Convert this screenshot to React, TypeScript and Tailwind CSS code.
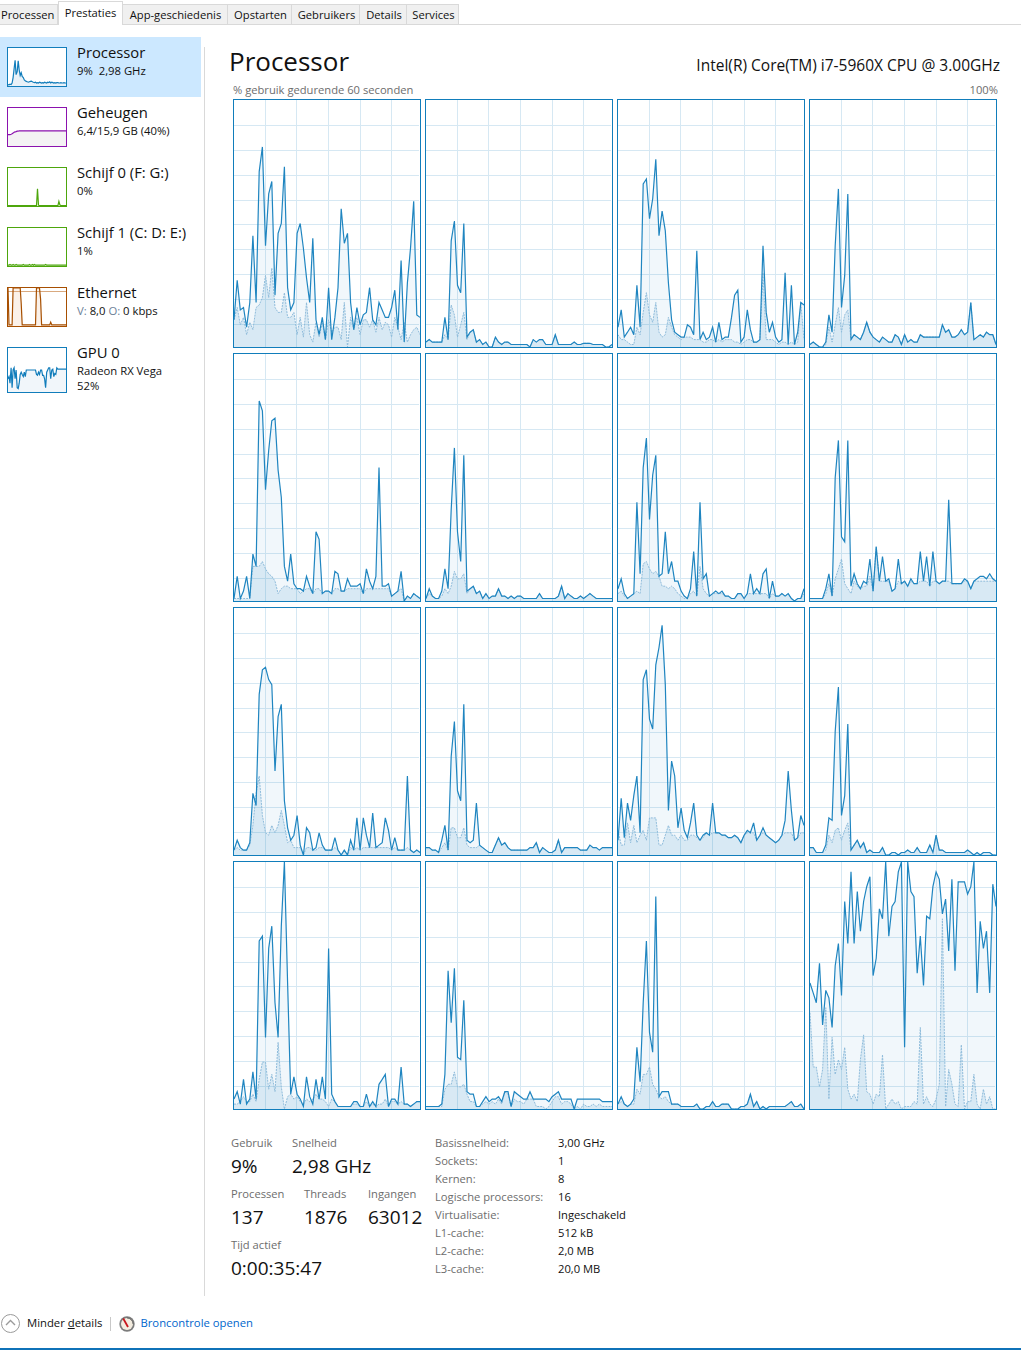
const font = { fontFamily: '"Open Sans", "Noto Sans", sans-serif' };

type CoreData = { u: number[]; k: number[]; cap: number };

const cores: CoreData[] = [
  {
    u: [11,27,15,16,8,18,45,18,71,81,41,62,67,21,46,50,73,24,15,18,46,50,40,28,18,44,11,5,12,3,24,3,12,24,56,42,46,18,7,16,9,13,14,24,11,9,18,15,12,12,16,23,7,35,2,26,40,59,13,12],
    k: [11,16,9,12,5,10,7,16,17,20,29,20,32,16,14,14,22,12,12,14,5,12,4,18,5,2,10,4,10,3,11,6,8,8,3,18,0,12,7,12,5,11,11,8,11,6,12,7,10,9,4,12,8,3,10,2,5,7,8,5],
    cap: 100,
  },
  {
    u: [2,3,2,2,2,2,12,3,43,51,25,22,50,4,6,7,2,3,1,2,0,0,4,2,1,2,2,1,1,1,1,1,1,0,3,2,3,3,1,1,1,5,1,1,1,1,1,2,1,1,1.5,1.5,1.5,1,1,1,1,0,0,1],
    k: [2,3,2,2,2,2,5,3,17,13,4,9,14,3],
    cap: 100,
  },
  {
    u: [8,15,4,6,8,5,25,8,66,68,52,60,76,45,55,47,26,11,6,5,4,4,9,8,5,39,3,6,3,4,8,2,10,3,4,4,12,21,23,2,4,15,7,2,2,3,41,14,6,10,4,2,3,30,1,25,1,6,18,17],
    k: [5,3,3,2,1,1,8,5,14,22,13,10,18,6,4,5,12,8,5,4,3,4,4,4,3,3,3,2,2,3,3,2,3,2,3,3,3,2,2,1,2,3,3,2,2,3,30,3,3,3,2,1,2,2,1,2,1,2,18,3],
    cap: 100,
  },
  {
    u: [1,2,1,0,0,2,13,6,41,64,16,29,62,3,5,4,3,6,10,6,4,3,2,4,3,2,2,5,4,1,5,2,3,2,2,5,4,4,4,4,4,4,9,6,7,4,4,5,7,5,6,18,3,4,5,4,6,5,5,1],
    k: [1,2,1,0,0,1,8,2,9,16,6,13,15,3],
    cap: 100,
  },
  {
    u: [1,10,1,4,10,1,19,14,81,77,45,61,73,74,53,42,14,8,19,7,5,5,4,10,6,3,28,25,3,4,4,3,12,11,4,4,9,6,6,6,7,3,13,8,5,10,54,6,6,7,2,3,4,12,0,2,1,3,2,1],
    k: [1,1,1,1,1,1,14,14,14,16,13,11,10,8,3,5,6,6,5,5,5,3],
    cap: 5,
  },
  {
    u: [1,5,2,1,1,4,13,5,37,62,28,16,59,4,5,6,3,4,1,3,1,2,2,5,2,2,1,2,1,2,2,1,1,1,1,1,3,1,1,1,1,1,2,6,1,3,2,1,1,2,1,2,3,2,1,1,1,1,1,1],
    k: [1,3,2,1,1,2,5,3,6,12,9,9,11,3],
    cap: 100,
  },
  {
    u: [5,9,3,1,2,3,40,11,54,66,33,51,59,10,11,28,11,16,8,8,4,2,1,5,20,2,40,9,11,2,3,4,3,4,2,2,1,1,3,3,1,3,11,3,5,3,11,13,1,8,2,2,3,2,3,1,0,1,1,5],
    k: [3,4,2,1,2,3,4,3,15,16,13,11,12,10,6,6,5,6,5,3,2,1,1,3,4,2,14,5],
    cap: 3,
  },
  {
    u: [1,1,1,1,1,5,11,2,50,65,26,24,65,6,11,7,5,8,7,17,4,22,8,18,8,9,4,5,17,7,8,6,9,7,7,20,8,18,6,20,8,7,8,8,41,7,7,7,7,9,8,5,8,9,10,10,9,11,9,8],
    k: [1,1,1,1,1,3,7,2,9,13,17,7,5,3,8,6,5,6,6,10,4,22],
    cap: 8,
  },
  {
    u: [2,6,3,2,2,5,25,20,65,75,76,71,69,34,56,61,22,11,6,8,16,4,0,11,9,2,3,9,4,2,2,2,7,2,0,2,0,6,2,15,2,15,8,3,17,3,4,5,15,10,2,7,2,2,2,32,2,1,2,1],
    k: [2,3,2,2,2,4,12,25,32,16,9,8,12,9,12,18,12,5,6,3,3,3,0,3,3,2,2,3,3,2],
    cap: 3,
  },
  {
    u: [3,3,2,2,1,6,12,2,40,54,26,22,61,6,5,6,21,4,3,2,1,1,4,7,4,5,3,2,2,2,2,2,2,3,3,5,1,3,2,1,1,2,6,1,3,3,3,3,3,2,2,2,4,3,3,2,3,3,3,3],
    k: [3,3,2,2,1,3,5,2,11,11,7,7,11,4,3,3,3],
    cap: 100,
  },
  {
    u: [6,23,7,21,14,24,32,9,71,75,55,51,77,84,93,69,18,38,32,11,19,10,7,13,21,8,6,8,9,8,21,9,9,8,8,7,7,8,7,5,8,10,9,13,6,8,11,8,7,6,5,6,8,14,34,18,6,7,16,12],
    k: [10,4,4,13,5,12,5,8,10,6,15,15,15,4,4,8,12,8,8,6,8,6,6,8,8,7,6,7],
    cap: 9,
  },
  {
    u: [3,3,1,1,1,4,15,14,50,68,16,24,53,2,4,6,3,5,1,2,1,1,1,3,0,0,1,1,0,1,1,2,1,1,3,1,1,1,4,1,8,2,2,1,1,1,1,1,1,1,2,1,0,1,0,1,1,1,0,0],
    k: [3,3,1,1,1,2,8,5,10,11,6,10,13,2],
    cap: 100,
  },
  {
    u: [4,7,2,12,2,4,15,4,68,70,29,65,74,43,29,74,100,51,6,13,6,4,1,13,5,2,12,4,13,4,65,6,3,1,1,1,1,1,3,3,1,1,6,1,3,1,10,12,14,1,4,4,2,17,2,2,1,2,3,3],
    k: [2,2,3,5,3,3,6,3,12,19,19,8,14,7,27,9,0,5,6,4,5,3,2,4,3,4,6,4,4,3,1,4,3,1,1,1,1,1,2,2,1,1,3,1,2,1,2,2,4],
    cap: 3,
  },
  {
    u: [1,1,1,1,1,2,14,56,35,57,21,20,44,7,6,6,1,1,3,5,3,4,4,5,3,7,7,1,7,6,5,4,4,7,4,4,4,4,4,3,5,6,7,4,4,4,4,0,4,4,4,4,4,4,4,4,3,3,3,3],
    k: [1,1,1,1,1,1,8,10,10,15,9,9,10,6,3,3,1,1,2,3,2,3,2,4,2,7,6,1,4,3,3,2,4,4,4,1,1,1,0,1,3,5,5,2,3,3,2,0,1,0,2,1,1,2,1,2,1,1,1,1],
    cap: 100,
  },
  {
    u: [2,5,2,1,2,4,25,11,43,68,31,23,86,5,7,7,7,2,2,2,1,1,1,1,1,2,0,0,1,1,3,1,1,2,2,2,0,0,0,1,1,2,6,1,3,0,1,0,1,1,1,1,1,1,2,3,1,1,2,0],
    k: [2,3,2,1,2,2,8,6,14,14,17,10,8,5,4,5,3],
    cap: 100,
  },
  {
    u: [51,47,43,59,34,48,45,33,58,67,46,84,67,96,67,88,72,84,90,94,54,61,81,77,100,70,82,84,96,100,25,100,88,86,55,70,50,78,77,90,96,93,79,85,64,93,56,92,92,92,87,90,100,47,76,65,72,47,91,82],
    k: [39,17,17,9,16,41,4,29,14,20,16,25,8,4,6,3,20,30,7,6,2,6,5,22,0,2,4,2,3,0,1,1,1,3,2,33,2,5,2,1,4,10,77,1,16,10,2,1,26,0,3,3,14,2,0,8,2,5,0,0],
    cap: 100,
  },
];

const tabs = [
  { label: "Processen", w: "w-[58px] justify-start pl-px" },
  { label: "Prestaties", w: "w-[65px]", active: true },
  { label: "App-geschiedenis", w: "w-[105px] pl-px" },
  { label: "Opstarten", w: "w-[64px] pl-[2px]" },
  { label: "Gebruikers", w: "w-[68px] pl-[2px]" },
  { label: "Details", w: "w-[47px] pl-[2px]" },
  { label: "Services", w: "w-[52px] pl-[2px]" },
];

const specs = [
  ["Basissnelheid:", "3,00 GHz"],
  ["Sockets:", "1"],
  ["Kernen:", "8"],
  ["Logische processors:", "16"],
  ["Virtualisatie:", "Ingeschakeld"],
  ["L1-cache:", "512 kB"],
  ["L2-cache:", "2,0 MB"],
  ["L3-cache:", "20,0 MB"],
];

function points(values: number[], w: number, h: number) {
  const step = w / (values.length - 1);
  return values.map((v, i) => `${(i * step).toFixed(1)},${(h - (v / 100) * h).toFixed(1)}`).join(" ");
}

function area(values: number[], w: number, h: number) {
  return `0,${h} ${points(values, w, h)} ${w},${h}`;
}

function CoreGraph({ data }: { data: CoreData }) {
  const w = 186;
  const h = 247;
  const kernel = data.u.map((v, i) => (i < data.k.length ? data.k[i] : Math.min(v, data.cap)));
  const rows = [25, 50, 75, 100, 124, 149, 174, 199, 224];
  const cols = [31, 62, 94, 126, 157];

  return (
    <div className="w-[188px] h-[249px] border border-[#117dbb] bg-white">
      <svg width={w} height={h} className="block">
        {rows.map((y) => (
          <line key={y} x1={0} x2={w - 1} y1={y + 0.5} y2={y + 0.5} stroke="#d6e8f3" />
        ))}
        {cols.map((x) => (
          <line key={x} x1={x + 0.5} x2={x + 0.5} y1={0} y2={h} stroke="#d6e8f3" />
        ))}
        <polygon points={area(data.u, w, h)} fill="#117dbb" fillOpacity={0.06} />
        <polygon points={area(kernel, w, h)} fill="#117dbb" fillOpacity={0.11} />
        <polyline points={points(kernel, w, h)} fill="none" stroke="#8fbcdb" strokeDasharray="2 1" />
        <polyline points={points(data.u, w, h)} fill="none" stroke="#1f85c0" strokeWidth={1.2} />
      </svg>
    </div>
  );
}

function MiniGraph({
  values,
  border,
  fill,
  height = "h-[40px]",
  h = 38,
  children,
}: {
  values: number[];
  border: string;
  fill: string;
  height?: string;
  h?: number;
  children?: React.ReactNode;
}) {
  return (
    <div className={`w-[60px] ${height} border bg-white shrink-0`} style={{ borderColor: border }}>
      <svg width={58} height={h} className="block">
        <polygon points={area(values, 58, h)} fill={fill} />
        {children}
        <polyline points={points(values, 58, h)} fill="none" stroke={border} strokeWidth={1.2} />
      </svg>
    </div>
  );
}

const cpuMini = [4,3,5,4,8,22,45,68,30,38,66,42,28,35,25,22,16,14,12,11,10,11,12,13,11,10,9,10,8,9,8,10,9,8,9,8,10,9,8,10,9,11,8,10,9,8,9,8,9,9,8,8,9,8,8,9,8,8];
const memMini = [30,30,30,31,32,34,36,37,38,39,39,40,40,40,40,40,40,40,40,40,40,40,40,40,40,40,40,40,40,40,40,40,40,40,40,40,40,40,40,40,40,40,40,40,40,40,40,40,40,40,40,40,40,40,40,40,40,40];
const disk0Mini = [1,1,1,1,1,1,1,1,1,1,1,1,1,1,1,1,1,1,1,1,1,1,1,1,1,1,1,1,1,45,2,1,1,1,1,1,1,1,1,1,1,1,1,1,1,1,1,1,1,1,12,3,1,1,1,1,1,1];
const disk1Mini = [2,2,4,2,2,4,2,2,4,2,2,2,2,2,2,4,2,2,2,2,2,4,2,2,4,2,4,2,2,2,2,2,2,2,2,2,2,4,2,2,2,2,2,2,2,2,2,2,2,2,2,2,2,2,2,2,2,2];
const netMini = [100,3,3,3,3,100,100,100,100,100,100,100,100,60,3,3,3,3,3,3,3,3,3,3,3,3,3,3,100,100,100,100,70,3,3,3,3,3,3,3,3,3,10,3,3,3,3,3,3,3,3,3,3,3,3,3,3,3];
const gpuMini = [30,35,20,55,10,50,55,30,50,10,8,20,40,45,40,35,45,35,50,50,50,50,50,50,50,50,50,50,40,38,45,40,50,50,38,38,30,10,45,50,55,55,30,50,52,35,42,40,55,52,52,52,52,52,52,52,52,52];

function SideItem({ title, children, graph, active }: { title: string; children: React.ReactNode; graph: React.ReactNode; active?: boolean }) {
  return (
    <div className={`h-[60px] flex pl-[7px] pt-[10px] gap-[10px] ${active ? "bg-[#cce8ff]" : ""}`}>
      {graph}
      <div className="-mt-[5px] text-[11.3px] leading-[16px] text-[#111] whitespace-nowrap">
        <div className="text-[14.8px] leading-[21px]">{title}</div>
        {children}
      </div>
    </div>
  );
}

function Stat({ label, value, className }: { label: string; value: string; className: string }) {
  return (
    <div className={className}>
      <div className="text-[11.2px] leading-[16px] text-[#6d6d6d] whitespace-nowrap">{label}</div>
      <div className="text-[19px] leading-[27px] text-[#111] mt-[2px] whitespace-nowrap">{value}</div>
    </div>
  );
}

export default function App() {
  return (
    <div className="w-[1021px] h-[1350px] bg-white flex flex-col overflow-hidden" style={font}>
      {/* tabs */}
      <div className="h-[25px] flex items-end border-b border-[#d9d9d9] shrink-0 text-[11.2px] text-[#111]">
        {tabs.map((t) =>
          t.active ? (
            <div key={t.label} className={`${t.w} h-[24px] -mb-px pb-px bg-white border border-b-0 border-[#d9d9d9] flex items-center justify-center`}>
              {t.label}
            </div>
          ) : (
            <div key={t.label} className={`${t.w} h-[20px] pt-px bg-[#f0f0f0] border-r border-t border-[#d9d9d9] flex items-center justify-center whitespace-nowrap`}>
              {t.label}
            </div>
          )
        )}
      </div>

      <div className="flex flex-1 min-h-0">
        {/* sidebar */}
        <div className="w-[201px] shrink-0 pt-[12px]">
          <SideItem active title="Processor" graph={<MiniGraph values={cpuMini} border="#117dbb" fill="#e8f1f8" />}>
            9%&nbsp; 2,98 GHz
          </SideItem>
          <SideItem title="Geheugen" graph={<MiniGraph values={memMini} border="#8b12ae" fill="#f4f2f4" />}>
            6,4/15,9 GB (40%)
          </SideItem>
          <SideItem title="Schijf 0 (F: G:)" graph={<MiniGraph values={disk0Mini} border="#4da60c" fill="#eff7e8" />}>
            0%
          </SideItem>
          <SideItem title="Schijf 1 (C: D: E:)" graph={<MiniGraph values={disk1Mini} border="#4da60c" fill="#eff7e8" />}>
            1%
          </SideItem>
          <SideItem
            title="Ethernet"
            graph={
              <MiniGraph values={netMini} border="#a74f01" fill="#fbf1e9">
                <line x1={0} x2={58} y1={3.5} y2={3.5} stroke="#d9a97f" />
              </MiniGraph>
            }
          >
            <span className="text-[#6d7f99]">V:</span> 8,0 <span className="text-[#6d7f99]">O:</span> 0 kbps
          </SideItem>
          <SideItem title="GPU 0" graph={<MiniGraph values={gpuMini} border="#117dbb" fill="#f1f6fa" height="h-[46px]" h={44} />}>
            <div className="leading-[15px]">Radeon RX Vega</div>
            <div className="leading-[15px]">52%</div>
          </SideItem>
        </div>

        {/* divider */}
        <div className="w-px bg-[#d9d9d9] ml-[3px] mt-[22px] shrink-0" />

        {/* main */}
        <div className="flex-1 pl-[25px] pr-[21px] min-w-0">
          <div className="flex justify-between items-end h-[50px] mt-[7px]">
            <div className="text-[26px] leading-[36px] text-[#111] mb-[3px] -ml-px">Processor</div>
            <div className="text-[15.5px] leading-[20px] text-[#111] mb-[7px] whitespace-nowrap">Intel(R) Core(TM) i7-5960X CPU @ 3.00GHz</div>
          </div>
          <div className="flex justify-between pl-[3px] pr-[2px] h-[17px] text-[11.2px] leading-[15px] text-[#6d6d6d]">
            <span>% gebruik gedurende 60 seconden</span>
            <span>100%</span>
          </div>
          <div className="grid grid-cols-[repeat(4,188px)] gap-x-[4px] gap-y-[5px] ml-[3px]">
            {cores.map((c, i) => (
              <CoreGraph key={i} data={c} />
            ))}
          </div>

          {/* stats */}
          <div className="flex mt-[25px] ml-[1px]">
            <div className="w-[204px] shrink-0">
              <div className="flex">
                <Stat label="Gebruik" value="9%" className="w-[61px]" />
                <Stat label="Snelheid" value="2,98 GHz" className="" />
              </div>
              <div className="flex mt-[6px]">
                <Stat label="Processen" value="137" className="w-[73px]" />
                <Stat label="Threads" value="1876" className="w-[64px]" />
                <Stat label="Ingangen" value="63012" className="" />
              </div>
              <div className="mt-[6px]">
                <Stat label="Tijd actief" value="0:00:35:47" className="" />
              </div>
            </div>
            <div className="grid grid-cols-[123px_1fr] text-[11.2px] leading-[18px] -mt-px self-start">
              {specs.map(([k, v]) => (
                <div key={k} className="contents">
                  <span className="text-[#6d6d6d] whitespace-nowrap">{k}</span>
                  <span className="text-[#111] whitespace-nowrap">{v}</span>
                </div>
              ))}
            </div>
          </div>
        </div>
      </div>

      {/* footer */}
      <div className="h-[54px] shrink-0 flex items-center pl-px pt-[3px] text-[11.3px] text-[#111] border-b-2 border-[#0f72b8]">
        <svg width={19} height={19} viewBox="0 0 19 19" className="block">
          <circle cx={9.5} cy={9.5} r={9} fill="none" stroke="#9a9a9a" />
          <path d="M5 11 L9.5 6.5 L14 11" fill="none" stroke="#9a9a9a" strokeWidth={1.4} />
        </svg>
        <span className="ml-[7px]">
          Minder <span className="underline">d</span>etails
        </span>
        <div className="w-px h-[14px] bg-[#c8c8c8] ml-[8px]" />
        <svg width={16} height={16} viewBox="0 0 16 16" className="block ml-[8px]">
          <circle cx={8} cy={8} r={7.7} fill="#7c7c7c" />
          <circle cx={8} cy={8} r={6} fill="#f3ecdf" />
          <path d="M4.2 2.5 L9 11" stroke="#c8161d" strokeWidth={1.8} />
          <path d="M8 2 A6 6 0 0 1 14 8" fill="none" stroke="#5a5a5a" strokeWidth={0.8} />
        </svg>
        <span className="ml-[5px] text-[#0066cc]">Broncontrole openen</span>
      </div>
    </div>
  );
}
